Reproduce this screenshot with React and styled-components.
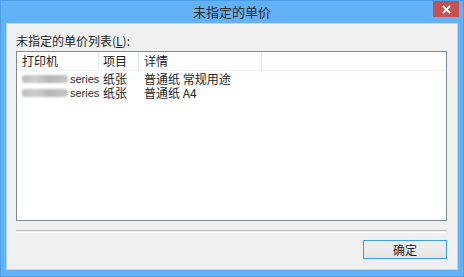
import React from "react";
import styled, { createGlobalStyle } from "styled-components";

const Global = createGlobalStyle`
  html, body { margin: 0; padding: 0; }
  body { font-family: "Noto Sans", "Noto Sans CJK SC", sans-serif; }
`;

const Window = styled.div`
  width: 464px;
  height: 277px;
  box-sizing: border-box;
  background: #63b1f6;
  border: 1px solid #4c9de8;
  display: flex;
  flex-direction: column;
`;

const TitleBar = styled.div`
  height: 23px;
  display: grid;
  grid-template-columns: 1fr auto 1fr;
  align-items: start;
`;

const Title = styled.div`
  grid-column: 2;
  font-family: "Noto Sans CJK SC", sans-serif;
  font-size: 13px;
  line-height: 22px;
  color: #2b2b2b;
`;

const CloseButton = styled.div`
  grid-column: 3;
  justify-self: end;
  margin-right: 4px;
  width: 26px;
  height: 16px;
  background: #c75050;
  display: flex;
  align-items: center;
  justify-content: center;
`;

const Client = styled.div`
  flex: 1;
  margin: 0 5px 6px 5px;
  border: 1px solid #b8d8f8;
  background: #f0f0f0;
  padding: 9px 10px 10px 9px;
  display: flex;
  flex-direction: column;
  font-family: "Noto Sans CJK SC", sans-serif;
  font-size: 12px;
  color: #1e1e1e;
`;

const Label = styled.div`
  line-height: 16px;
  margin-bottom: 2px;
  u { text-decoration: underline; }
`;

const ListBox = styled.div`
  height: 170px;
  box-sizing: border-box;
  border: 1px solid #828790;
  background: #ffffff;
  display: flex;
  flex-direction: column;
`;

const columns = "82px 40px 123px 1fr";

const Header = styled.div`
  display: grid;
  grid-template-columns: ${columns};
  height: 19px;
  box-sizing: border-box;
  background: #fdfdfe;
  border-bottom: 1px solid #eef2f8;
  margin-bottom: 1px;
`;

const HeaderCell = styled.div`
  line-height: 18px;
  padding-left: ${(p) => p.$pad}px;
  border-right: ${(p) => (p.$last ? "none" : "1px solid #e4ebf3")};
  white-space: nowrap;
`;

const Row = styled.div`
  display: grid;
  grid-template-columns: ${columns};
  height: 14px;
  line-height: 14px;
`;

const Cell = styled.div`
  padding-left: ${(p) => p.$pad}px;
  white-space: nowrap;
  display: flex;
  align-items: center;
`;

const Blur = styled.span`
  display: inline-block;
  flex: none;
  width: 46px;
  height: 8px;
  margin-right: 2px;
  border-radius: 3px;
  background: linear-gradient(90deg, #bcbcbc, #cdcdcd 30%, #b6b6b6 60%, #c6c6c6);
  filter: blur(1.2px);
`;

const Latin = styled.span`
  font-family: "Liberation Sans", sans-serif;
  font-size: 11px;
  color: #2a2a2a;
`;

const Separator = styled.div`
  margin-top: 9px;
  height: 1px;
  border-top: 1px solid #b9b9b9;
  border-bottom: 1px solid #ffffff;
`;

const Footer = styled.div`
  margin-top: 7px;
  display: flex;
  justify-content: flex-end;
`;

const Button = styled.div`
  width: 84px;
  height: 19px;
  box-sizing: border-box;
  border: 1px solid #3c9cf2;
  background: linear-gradient(#f0f0f0, #e5e5e5);
  display: flex;
  align-items: center;
  justify-content: center;
  font-size: 12px;
  color: #1e1e1e;
`;

const rows = [
  { item: "纸张", detail: "普通纸 常规用途" },
  { item: "纸张", detail: "普通纸 A4" },
];

export default function App() {
  return (
    <>
      <Global />
      <Window>
        <TitleBar>
          <Title>未指定的单价</Title>
          <CloseButton>
            <svg width="9" height="9" viewBox="0 0 9 9">
              <path d="M1 1 L8 8 M8 1 L1 8" stroke="#ffffff" strokeWidth="2" />
            </svg>
          </CloseButton>
        </TitleBar>
        <Client>
          <Label>
            未指定的单价列表(<u>L</u>):
          </Label>
          <ListBox>
            <Header>
              <HeaderCell $pad={5}>打印机</HeaderCell>
              <HeaderCell $pad={4}>项目</HeaderCell>
              <HeaderCell $pad={5}>详情</HeaderCell>
              <HeaderCell $pad={5} $last />
            </Header>
            {rows.map((r, i) => (
              <Row key={i}>
                <Cell $pad={5}>
                  <Blur />
                  <Latin>series</Latin>
                </Cell>
                <Cell $pad={4}>{r.item}</Cell>
                <Cell $pad={5}>{r.detail}</Cell>
                <Cell />
              </Row>
            ))}
          </ListBox>
          <Separator />
          <Footer>
            <Button>确定</Button>
          </Footer>
        </Client>
      </Window>
    </>
  );
}
